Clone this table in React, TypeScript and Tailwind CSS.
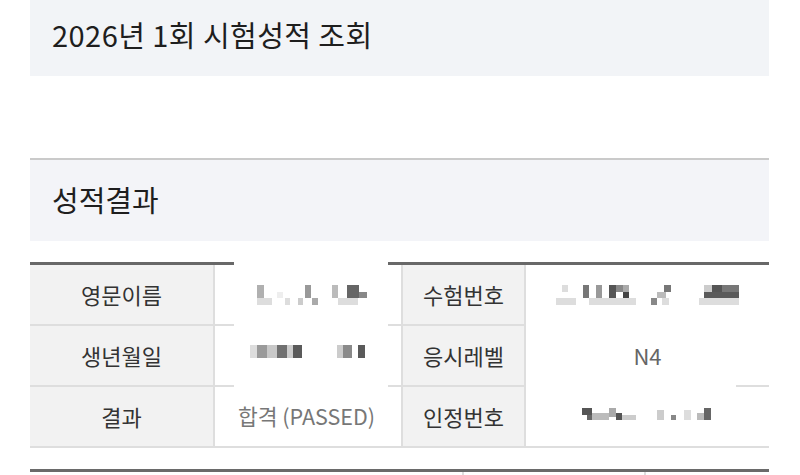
import React from "react";

type R = [number, number, number, number, string];

const Mosaic = ({ rects, w, h }: { rects: R[]; w: number; h: number }) => (
  <svg width={w} height={h} viewBox={`0 0 ${w} ${h}`} className="block shrink-0">
    {rects.map(([x, y, rw, rh, c], i) => (
      <rect key={i} x={x} y={y} width={rw} height={rh} fill={c} />
    ))}
  </svg>
);

const m1: R[] = [
  [42, 20, 7, 13, "#b0b0b0"],
  [42, 33, 15, 7, "#dddddd"],
  [62, 27, 6, 6, "#eeeeee"],
  [70, 33, 5, 7, "#dddddd"],
  [83, 33, 5, 7, "#cccccc"],
  [90, 20, 6, 13, "#999999"],
  [97, 33, 6, 7, "#aaaaaa"],
  [117, 20, 6, 13, "#bbbbbb"],
  [123, 33, 20, 7, "#dddddd"],
  [132, 20, 12, 13, "#666666"],
  [144, 27, 8, 6, "#888888"],
];
const m2: R[] = [
  [35, 19, 7, 13, "#dddddd"],
  [42, 19, 10, 13, "#9a9a9a"],
  [52, 19, 10, 13, "#c8c8c8"],
  [62, 19, 10, 13, "#707070"],
  [72, 19, 6, 13, "#cccccc"],
  [78, 19, 9, 13, "#5a5a5a"],
  [122, 19, 6, 13, "#cccccc"],
  [128, 19, 9, 13, "#8a8a8a"],
  [143, 19, 7, 13, "#5a5a5a"],
];
const m3: R[] = [
  [36, 20, 6, 7, "#dddddd"],
  [30, 33, 20, 7, "#dddddd"],
  [57, 20, 6, 13, "#777777"],
  [70, 20, 6, 13, "#999999"],
  [63, 33, 47, 7, "#dddddd"],
  [83, 20, 7, 13, "#555555"],
  [90, 20, 7, 7, "#888888"],
  [97, 20, 6, 7, "#aaaaaa"],
  [97, 27, 6, 6, "#444444"],
  [138, 20, 7, 7, "#777777"],
  [131, 27, 9, 6, "#bbbbbb"],
  [125, 33, 6, 7, "#888888"],
  [136, 33, 7, 7, "#dddddd"],
  [178, 20, 8, 7, "#cccccc"],
  [186, 20, 10, 7, "#555555"],
  [196, 20, 17, 7, "#777777"],
  [178, 27, 35, 6, "#5a5a5a"],
  [173, 33, 40, 7, "#dddddd"],
];
const m4: R[] = [
  [56, 21, 10, 7, "#555555"],
  [61, 28, 5, 5, "#666666"],
  [66, 26, 17, 7, "#bbbbbb"],
  [83, 21, 7, 9, "#aaaaaa"],
  [90, 26, 6, 7, "#555555"],
  [96, 28, 14, 5, "#cccccc"],
  [131, 23, 7, 10, "#cccccc"],
  [145, 28, 5, 5, "#888888"],
  [158, 23, 7, 10, "#dddddd"],
  [171, 26, 7, 7, "#bbbbbb"],
  [178, 21, 7, 12, "#666666"],
];

const Label = ({ children }: { children: React.ReactNode }) => (
  <div className="w-[183px] bg-[#f2f2f2] border-r-2 border-[#dedede] box-content flex items-center justify-center text-[22px] text-[#333]">
    {children}
  </div>
);

const Label2 = ({ children }: { children: React.ReactNode }) => (
  <div className="w-[121px] bg-[#f2f2f2] border-x-2 border-[#dedede] box-content flex items-center justify-center text-[22px] text-[#333]">
    {children}
  </div>
);

const Row = ({
  label,
  value,
  label2,
  value2,
}: {
  label: string;
  value: React.ReactNode;
  label2: string;
  value2: React.ReactNode;
}) => (
  <div className="flex h-[59px]">
    <Label>{label}</Label>
    <div className="w-[173px] flex items-center justify-center text-[21.5px] text-[#777]">{value}</div>
    <div className="w-[13px]" />
    <Label2>{label2}</Label2>
    <div className="flex-1 flex items-center justify-center text-[22px] text-[#666]">{value2}</div>
  </div>
);

export default function App() {
  return (
    <div
      className="w-[800px] h-[475px] overflow-hidden bg-white"
      style={{ fontFamily: '"Noto Sans CJK KR", "Noto Sans", sans-serif' }}
    >
      <div className="ml-[30px] w-[739px]">
        <div className="h-[76px] bg-[#f2f4f7] flex items-center pl-[22px] pb-[6px]">
          <h1 className="text-[29px] text-[#1e1e1e] tracking-[0.45px]">2026년 1회 시험성적 조회</h1>
        </div>
        <div className="h-[82px]" />
        <div className="border-t-2 border-[#cacaca] h-[83px] bg-[#f3f4f8] flex items-center pl-[22px] pb-[2px]">
          <h2 className="text-[29px] text-[#1e1e1e]">성적결과</h2>
        </div>
        <div className="h-[21px]" />

        <div className="flex h-[3px]">
          <div className="w-[204px] bg-[#686868]" />
          <div className="w-[154px]" />
          <div className="flex-1 bg-[#686868]" />
        </div>

        <Row
          label="영문이름"
          value={<Mosaic rects={m1} w={173} h={59} />}
          label2="수험번호"
          value2={<Mosaic rects={m3} w={243} h={59} />}
        />
        <div className="flex h-[2px]">
          <div className="w-[204px] bg-[#dedede]" />
          <div className="w-[154px]" />
          <div className="w-[138px] bg-[#dedede]" />
        </div>
        <Row
          label="생년월일"
          value={<Mosaic rects={m2} w={173} h={59} />}
          label2="응시레벨"
          value2="N4"
        />
        <div className="flex h-[2px]">
          <div className="w-[204px] bg-[#dedede]" />
          <div className="w-[154px]" />
          <div className="w-[138px] bg-[#dedede]" />
          <div className="w-[210px]" />
          <div className="flex-1 bg-[#dedede]" />
        </div>
        <Row
          label="결과"
          value={<span className="pl-[10px]">합격 (PASSED)</span>}
          label2="인정번호"
          value2={<Mosaic rects={m4} w={243} h={59} />}
        />
        <div className="h-[2px] bg-[#dedede]" />

        <div className="h-[21px]" />
        <div className="h-[3px] bg-[#6a6a6a]" />
        <div className="flex h-[20px]">
          <div className="w-[432px]" />
          <div className="w-[2px] bg-[#dedede]" />
          <div className="w-[180px]" />
          <div className="w-[2px] bg-[#dedede]" />
        </div>
      </div>
    </div>
  );
}
